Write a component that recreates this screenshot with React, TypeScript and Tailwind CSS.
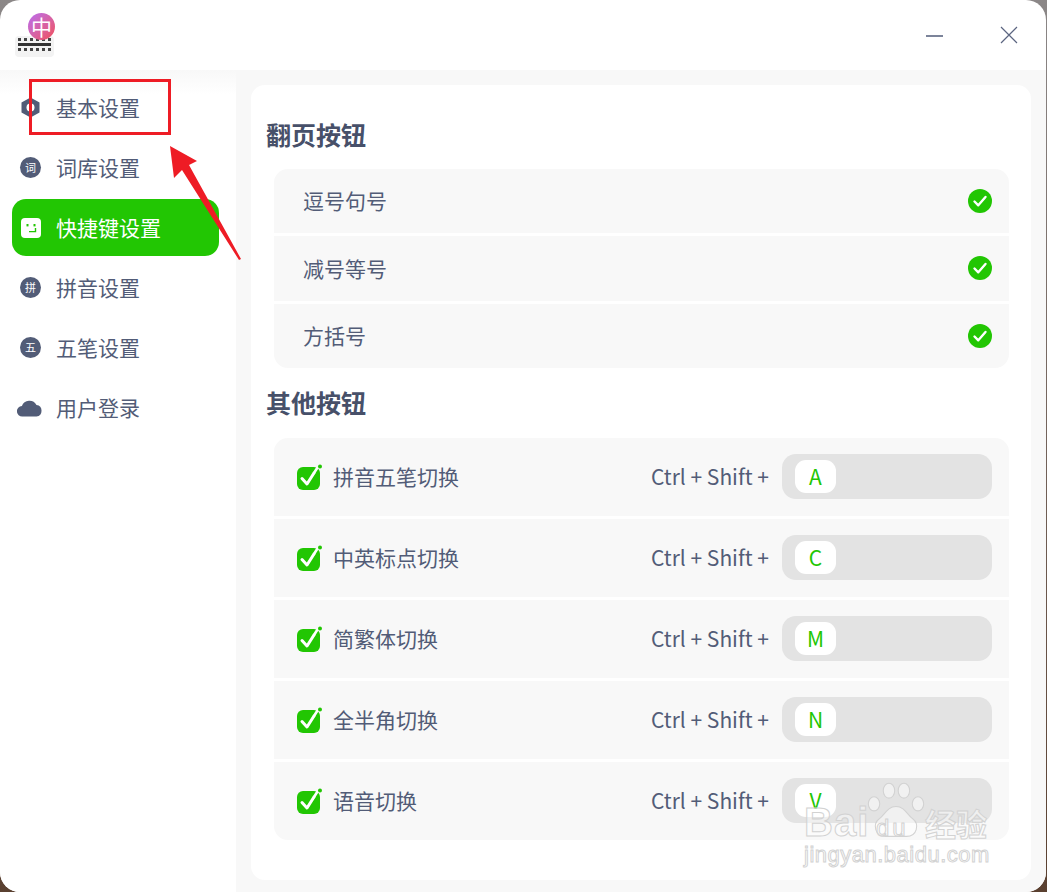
import React from "react";

const FONT = "font-['Noto_Sans_CJK_SC','Noto_Sans',sans-serif]";

function CheckBox() {
  return (
    <svg width="26" height="26" viewBox="0 0 26 26" className="shrink-0">
      <rect x="1" y="3" width="23" height="23" rx="6" fill="#22c603" />
      <path d="M6 14.5l5 5.5 7-11" fill="none" stroke="#fff" strokeWidth="3" strokeLinecap="round" strokeLinejoin="round" />
      <path d="M18 9l3.2-5" fill="none" stroke="#fff" strokeWidth="2.6" strokeLinecap="round" />
      <circle cx="24" cy="2.6" r="2" fill="#22c603" />
    </svg>
  );
}

function RoundCheck() {
  return (
    <svg width="24" height="24" viewBox="0 0 24 24">
      <circle cx="12" cy="12" r="12" fill="#22c603" />
      <path d="M6.5 12.5l3.8 3.8 7.2-8.3" fill="none" stroke="#fff" strokeWidth="2.4" strokeLinecap="round" strokeLinejoin="round" />
    </svg>
  );
}

function GlyphCircle({ glyph }: { glyph: string }) {
  return (
    <span className="flex h-[21px] w-[21px] items-center justify-center rounded-full bg-[#525c77] text-[11px] leading-none text-white">
      {glyph}
    </span>
  );
}

function NavIcon({ kind }: { kind: string }) {
  if (kind === "hex") {
    return (
      <svg width="21" height="21" viewBox="0 0 21 21">
        <path d="M10.5 0.5l9 5v10l-9 5-9-5v-10z" fill="#525c77" />
        <circle cx="10.5" cy="10.5" r="4" fill="#fff" />
      </svg>
    );
  }
  if (kind === "key") {
    return (
      <svg width="20" height="20" viewBox="0 0 20 20">
        <rect width="20" height="20" rx="4" fill="#fff" />
        <rect x="5.5" y="6" width="2" height="2.4" fill="#22c603" />
        <rect x="12.5" y="6" width="2" height="2.4" fill="#22c603" />
        <path d="M14.5 10v3.6H8" fill="none" stroke="#22c603" strokeWidth="1.4" />
      </svg>
    );
  }
  if (kind === "cloud") {
    return (
      <svg width="25" height="19" viewBox="0 0 25 19" className="-ml-[2px] shrink-0">
        <path d="M5.5 18.5a5.3 5.3 0 0 1-.6-10.6A8 8 0 0 1 19.5 7a5.8 5.8 0 0 1 0 11.5z" fill="#525c77" />
      </svg>
    );
  }
  return <GlyphCircle glyph={kind} />;
}

const navItems = [
  { icon: "hex", label: "基本设置" },
  { icon: "词", label: "词库设置" },
  { icon: "key", label: "快捷键设置", active: true },
  { icon: "拼", label: "拼音设置" },
  { icon: "五", label: "五笔设置" },
  { icon: "cloud", label: "用户登录" },
];

const pageKeys = ["逗号句号", "减号等号", "方括号"];

const otherKeys = [
  { label: "拼音五笔切换", key: "A" },
  { label: "中英标点切换", key: "C" },
  { label: "简繁体切换", key: "M" },
  { label: "全半角切换", key: "N" },
  { label: "语音切换", key: "V" },
];

function AppLogo() {
  return (
    <div className="relative h-[42px] w-[42px]">
      <div className="absolute bottom-[-1px] left-[1px] flex h-[21px] w-[39px] flex-col gap-[2px] rounded-[4px] bg-[#f3f3f3] px-[3px] pt-[2px]">
        <div className="h-[3px] border-t-[3px] border-dotted border-[#444]" />
        <div className="h-[3px] bg-[#333]" />
        <div className="h-[3px] border-t-[3px] border-dotted border-[#444]" />
      </div>
      <div className="absolute left-[14px] top-[-1px] flex h-[27px] w-[27px] items-center justify-center rounded-full bg-gradient-to-br from-[#b96af0] to-[#f24a55] text-[21px] leading-none text-white">
        中
      </div>
    </div>
  );
}

function Watermark() {
  const stroke = "text-white/45 [-webkit-text-stroke:1px_#d2d2d2]";
  return (
    <div className="absolute left-[804px] top-[778px] h-[92px] w-[190px] font-['Liberation_Sans',sans-serif]">
      <svg width="58" height="60" viewBox="0 0 66 62" className="absolute left-[63px] top-[2px]">
        <g fill="#ffffff" fillOpacity="0.5" stroke="#d2d2d2" strokeWidth="1.2">
          <ellipse cx="8" cy="24" rx="6.5" ry="8" />
          <ellipse cx="25" cy="9" rx="6.5" ry="8.5" />
          <ellipse cx="42" cy="9" rx="6.5" ry="8.5" />
          <ellipse cx="58" cy="24" rx="6.5" ry="8" />
          <path d="M33 27c10 0 13 10 19 14 8 6 5 20-7 20H21C9 61 6 47 14 41c6-4 9-14 19-14z" />
        </g>
      </svg>
      <span className={`absolute left-0 top-[24px] text-[40px] font-bold leading-none tracking-[1px] ${stroke}`}>Bai</span>
      <span className={`absolute left-[72px] top-[38px] text-[24px] leading-none tracking-[3px] ${stroke}`}>du</span>
      <span className={`absolute left-[121px] top-[29px] text-[31px] font-bold leading-[32px] ${FONT} ${stroke}`}>经验</span>
      <span className={`absolute left-0 top-[66px] text-[22px] leading-none tracking-[0.5px] ${stroke}`}>jingyan.baidu.com</span>
    </div>
  );
}

function Annotation() {
  return (
    <>
      <div className="absolute left-[29px] top-[79px] h-[56px] w-[142px] border-[3px] border-[#ee1c25]" />
      <svg width="90" height="125" viewBox="0 0 90 125" className="absolute left-[165px] top-[140px]">
        <path d="M5 6l27 15-8 4 52 94-2 1-57-90-8 8z" fill="#ee1c25" />
      </svg>
    </>
  );
}

export default function App() {
  return (
    <div className={`relative h-[892px] w-[1047px] overflow-hidden bg-gradient-to-b from-[#8b8787] to-[#5a4030] ${FONT}`}>
      <div className="flex h-full w-[1046px] flex-col overflow-hidden rounded-[20px] bg-white">
        <header className="flex h-[70px] shrink-0 items-center justify-between pl-[14px] pr-[27px]">
          <AppLogo />
          <div className="flex items-center gap-[54px]">
            <svg width="20" height="20" viewBox="0 0 20 20">
              <path d="M1 11h17" stroke="#5b6580" strokeWidth="1.6" />
            </svg>
            <svg width="20" height="20" viewBox="0 0 20 20">
              <path d="M2 2l16 16M18 2L2 18" stroke="#5b6580" strokeWidth="1.2" />
            </svg>
          </div>
        </header>
        <div className="flex min-h-0 flex-1">
          <nav className="flex w-[236px] shrink-0 flex-col gap-[3px] bg-gradient-to-b from-[#f8f8f8] to-white to-[3%] pl-[12px] pr-[17px] pt-[9px]">
            {navItems.map((item) => (
              <div
                key={item.label}
                className={`flex h-[57px] items-center gap-[15px] rounded-[14px] pl-[8px] text-[21px] ${
                  item.active ? "bg-[#22c603] text-white" : "text-[#525c77]"
                }`}
              >
                <span className="flex w-[21px] justify-center">
                  <NavIcon kind={item.icon} />
                </span>
                <span className="leading-none">{item.label}</span>
              </div>
            ))}
          </nav>
          <main className="flex-1 bg-[#f8f8f8] pb-[12px] pl-[15px] pr-[15px] pt-[15px]">
            <div className="h-full rounded-[14px] bg-white pl-[15px] pr-[22px]">
              <h2 className="flex h-[84px] items-center pt-[14px] text-[25px] font-bold leading-none text-[#475069]">翻页按钮</h2>
              <div className="ml-[8px] flex flex-col gap-[3px] overflow-hidden rounded-[14px]">
                {pageKeys.map((label) => (
                  <div key={label} className="flex h-[64.33px] items-center justify-between bg-[#f8f8f8] pl-[29px] pr-[17px] text-[21px] text-[#525c77]">
                    <span>{label}</span>
                    <RoundCheck />
                  </div>
                ))}
              </div>
              <h2 className="flex h-[70px] items-center text-[25px] font-bold leading-none text-[#475069]">其他按钮</h2>
              <div className="ml-[8px] flex flex-col gap-[3px] overflow-hidden rounded-[14px]">
                {otherKeys.map((row) => (
                  <div key={row.label} className="flex h-[78px] items-center bg-[#f8f8f8] pl-[22px] pr-[17px] text-[21px] text-[#525c77]">
                    <CheckBox />
                    <span className="ml-[11px]">{row.label}</span>
                    <span className="ml-auto">Ctrl + Shift +</span>
                    <div className="ml-[13px] flex h-[45px] w-[210px] items-center rounded-[14px] bg-[#e3e3e3] pl-[13px]">
                      <span className="flex h-[33px] min-w-[41px] items-center justify-center rounded-[11px] bg-white px-[12px] text-[21px] leading-none text-[#22c603]">
                        {row.key}
                      </span>
                    </div>
                  </div>
                ))}
              </div>
            </div>
          </main>
        </div>
      </div>
      <Annotation />
      <Watermark />
    </div>
  );
}
